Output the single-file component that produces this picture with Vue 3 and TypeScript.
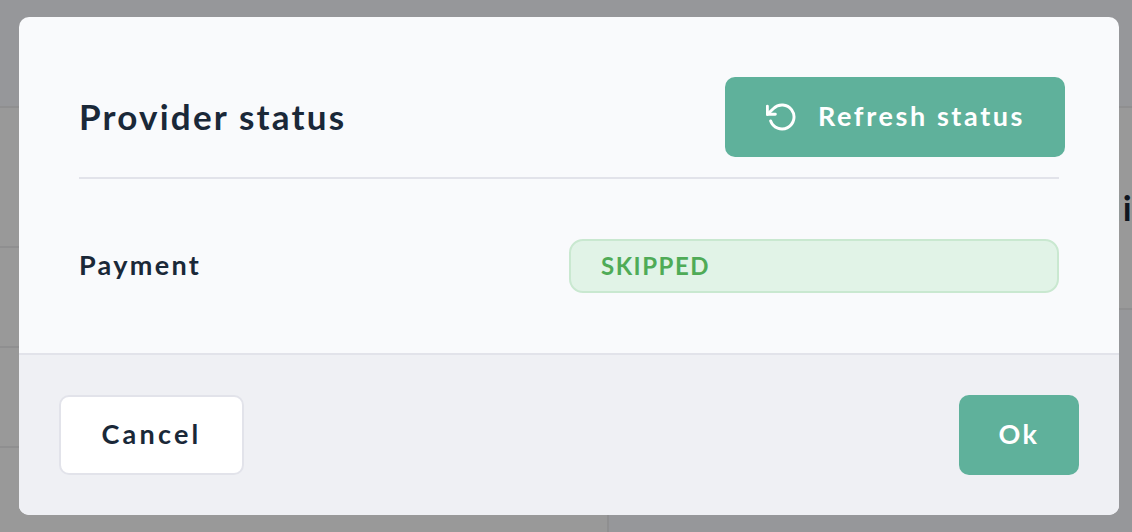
<script setup lang="ts">
interface Rule { top: number; left: number; width: number }
const rules: Rule[] = [
  { top: 106, left: 0, width: 1132 },
  { top: 246, left: 0, width: 607 },
  { top: 346, left: 0, width: 607 },
  { top: 446, left: 0, width: 607 },
  { top: 308, left: 607, width: 525 },
]
</script>

<template>
  <div class="page">
    <div class="backdrop">
      <div class="shade top"></div>
      <div class="shade lower"></div>
      <div v-for="r in rules" :key="r.top" class="line" :style="{ top: r.top + 'px', left: r.left + 'px', width: r.width + 'px' }"></div>
      <div class="vline"></div>
      <span class="peek">li</span>
    </div>
    <section class="modal">
      <div class="body">
        <header class="head">
          <h2 class="title">Provider status</h2>
          <button class="btn primary refresh">
            <svg class="icon" viewBox="0 0 24 24" fill="none" stroke="#fff" stroke-width="2.2" stroke-linecap="round" stroke-linejoin="round">
              <polyline points="1 4 1 10 7 10" />
              <path d="M3.51 15a9 9 0 1 0 2.13-9.36L1 10" />
            </svg>
            <span>Refresh status</span>
          </button>
        </header>
        <div class="row">
          <span class="label">Payment</span>
          <span class="badge">SKIPPED</span>
        </div>
      </div>
      <footer class="foot">
        <button class="btn cancel">Cancel</button>
        <button class="btn primary ok">Ok</button>
      </footer>
    </section>
  </div>
</template>

<style>
body { margin: 0; }
</style>

<style scoped>
.page {
  position: relative;
  width: 1132px;
  height: 532px;
  overflow: hidden;
  background: #999999;
  font-family: "Lato", "Noto Sans", sans-serif;
}
.backdrop { position: absolute; inset: 0; }
.shade { position: absolute; background: #96979a; }
.shade.top { left: 0; right: 0; top: 0; height: 107px; }
.shade.lower { left: 608px; right: 0; top: 309px; bottom: 0; }
.line { position: absolute; height: 2px; background: #8f8f90; }
.vline { position: absolute; left: 607px; top: 107px; bottom: 0; width: 2px; background: #8f8f90; }
.peek { position: absolute; left: 1112px; top: 186px; font-size: 35px; line-height: 42px; font-weight: 700; letter-spacing: 2px; color: #10161f; }
.modal {
  position: absolute;
  left: 19px;
  top: 17px;
  width: 1100px;
  height: 498px;
  display: flex;
  flex-direction: column;
  border-radius: 10px;
  overflow: hidden;
  background: #f9fafc;
}
.body { flex: 1; padding: 60px 60px 0; }
.head {
  display: flex;
  justify-content: space-between;
  align-items: center;
  height: 80px;
  padding-bottom: 20px;
  border-bottom: 2px solid #e2e3ea;
}
.title { margin: 0 0 2px; font-size: 35px; font-weight: 700; letter-spacing: 2.2px; color: #1a2838; }
.btn {
  box-sizing: border-box;
  height: 80px;
  padding: 0 0 3px;
  border-radius: 10px;
  font-family: inherit;
  font-size: 27px;
  font-weight: 700;
  letter-spacing: 2.6px;
  display: inline-flex;
  align-items: center;
  justify-content: center;
  border: none;
}
.primary { background: #5fb19b; color: #fff; }
.refresh { width: 340px; margin-right: -6px; gap: 20px; justify-content: flex-start; padding-left: 41px; }
.icon { width: 32px; height: 32px; margin-top: 3px; }
.row { display: flex; justify-content: space-between; align-items: center; margin-top: 60px; }
.label { margin-bottom: 3px; font-size: 27px; font-weight: 700; letter-spacing: 2.3px; color: #1a2838; }
.badge {
  box-sizing: border-box;
  width: 490px;
  height: 54px;
  display: flex;
  align-items: center;
  padding: 0 0 2px 30px;
  border: 2px solid #c9e8d0;
  border-radius: 14px;
  background: #e1f3e7;
  color: #4fab57;
  font-size: 24px;
  font-weight: 700;
  letter-spacing: 1.5px;
}
.foot {
  box-sizing: border-box;
  height: 162px;
  display: flex;
  justify-content: space-between;
  align-items: center;
  padding: 0 40px;
  background: #eff0f4;
  border-top: 2px solid #e2e3ea;
}
.cancel { width: 185px; background: #fff; color: #1a2838; border: 2px solid #e2e3ea; letter-spacing: 3.2px; }
.ok { width: 120px; }
</style>
